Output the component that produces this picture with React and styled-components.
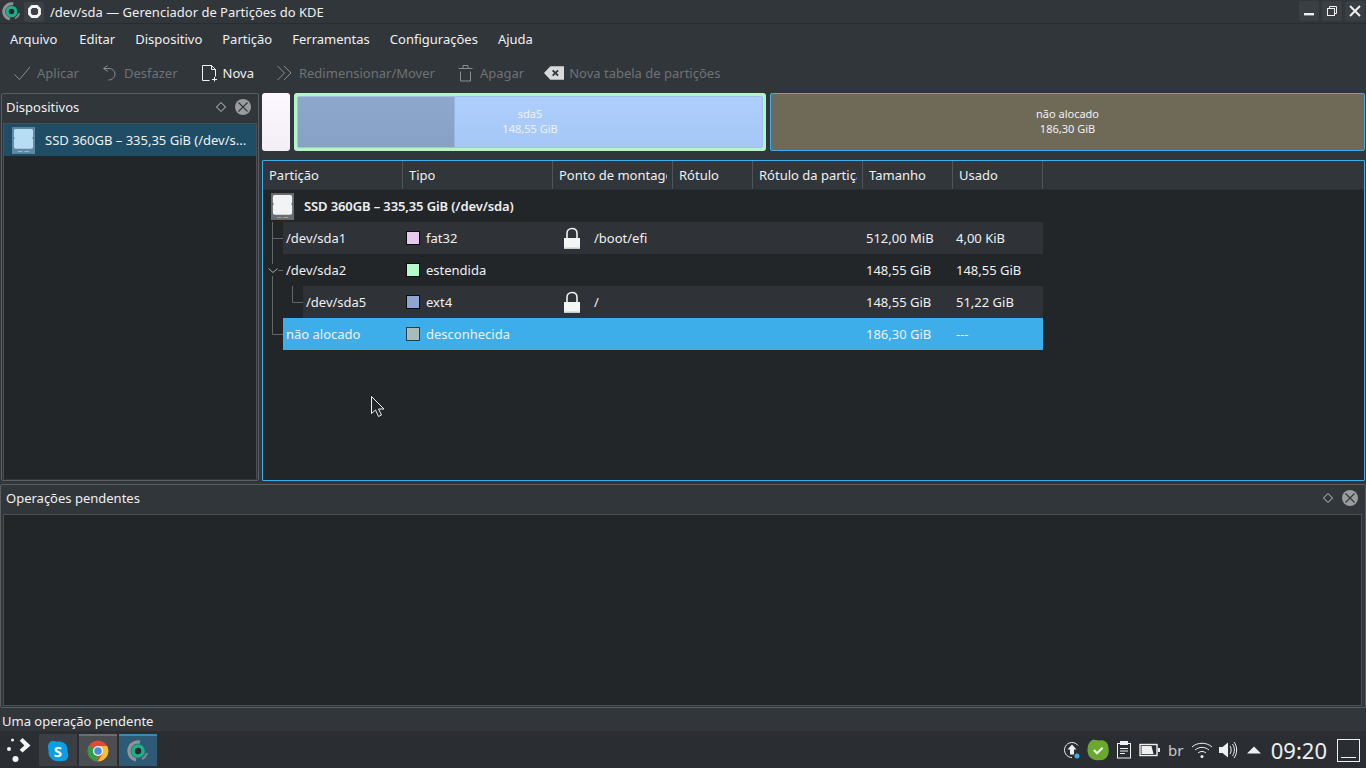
import React from "react"
import styled, { createGlobalStyle } from "styled-components"

const GlobalStyle = createGlobalStyle`
    html, body {
        margin: 0;
        padding: 0;
        height: 768px;
        overflow: hidden;
        background: #31363b;
    }
    body {
        font-family: "Noto Sans", "Open Sans", sans-serif;
        font-size: 13px;
        color: #eff0f1;
    }
`

const COLUMNS = [
    { label: "Partição", width: 140 },
    { label: "Tipo", width: 150 },
    { label: "Ponto de montagem", width: 120 },
    { label: "Rótulo", width: 80 },
    { label: "Rótulo da partição", width: 110 },
    { label: "Tamanho", width: 90 },
    { label: "Usado", width: 90 },
]

const ROWS = [
    { name: "/dev/sda1", type: "fat32", color: "#e6c8ee", lock: true, mount: "/boot/efi", size: "512,00 MiB", used: "4,00 KiB", alt: true, depth: 1, branch: "tee" },
    { name: "/dev/sda2", type: "estendida", color: "#b4f9ca", size: "148,55 GiB", used: "148,55 GiB", depth: 1, branch: "open" },
    { name: "/dev/sda5", type: "ext4", color: "#8da5cf", lock: true, mount: "/", size: "148,55 GiB", used: "51,22 GiB", alt: true, depth: 2, branch: "child" },
    { name: "não alocado", type: "desconhecida", color: "#a9bdb8", size: "186,30 GiB", used: "---", selected: true, depth: 1, branch: "last" },
]

export default function App() {
    return (
        <Screen>
            <GlobalStyle />
            <TitleBar>
                <AppLogo size={19} />
                <PinButton>
                    <svg width="13" height="13" viewBox="0 0 13 13"><path d="M4 1.500h5l2.500 2.500v5L9 11.500H4L1.500 9V4z" fill="none" stroke="#f4f5f5" strokeWidth="2.800" /></svg>
                </PinButton>
                <WindowTitle>/dev/sda — Gerenciador de Partições do KDE</WindowTitle>
                <WindowButtons>
                    <WindowButton>
                        <svg width="12" height="12" viewBox="0 0 12 12"><rect x="1" y="8" width="10" height="2.400" fill="#eff0f1" /></svg>
                    </WindowButton>
                    <WindowButton>
                        <svg width="12" height="12" viewBox="0 0 12 12" fill="none" stroke="#eff0f1"><rect x="1.500" y="3.500" width="7" height="7" /><path d="M3.500 3.500v-2h7v7h-2" /></svg>
                    </WindowButton>
                    <WindowButton>
                        <svg width="12" height="12" viewBox="0 0 12 12" stroke="#eff0f1" strokeWidth="2"><path d="M1 1l10 10M11 1L1 11" /></svg>
                    </WindowButton>
                </WindowButtons>
            </TitleBar>

            <MenuBar>
                {["Arquivo", "Editar", "Dispositivo", "Partição", "Ferramentas", "Configurações", "Ajuda"].map(item => (
                    <MenuItem key={item}>{item}</MenuItem>
                ))}
            </MenuBar>

            <ToolBar>
                <ToolButton>
                    <svg width="18" height="18" viewBox="0 0 18 18" fill="none" stroke="#8a8d90"><path d="M.5 10.500l5 5L16 3" /></svg>
                    Aplicar
                </ToolButton>
                <ToolButton>
                    <svg width="18" height="18" viewBox="0 0 18 18" fill="none" stroke="#8a8d90"><path d="M6.500 1.500L2.500 4.500 7 7.500" /><path d="M2.500 4.500H8c3.500 0 6 2.500 6 5.500s-2.500 6-6.500 6" /></svg>
                    Desfazer
                </ToolButton>
                <ToolButton active>
                    <svg width="18" height="18" viewBox="0 0 18 18" fill="none" stroke="#eff0f1"><path d="M9.500 16.500h-7v-15h9l4 4v7M11.500 1.500v4h4" /><path d="M14.500 13v4.500M12 15.500h5" /></svg>
                    Nova
                </ToolButton>
                <ToolButton>
                    <svg width="18" height="18" viewBox="0 0 18 18" fill="none" stroke="#8a8d90"><path d="M1.500 2l7 7-7 7M8 2l7 7-7 7" /></svg>
                    Redimensionar/Mover
                </ToolButton>
                <ToolButton>
                    <svg width="18" height="18" viewBox="0 0 18 18" fill="none" stroke="#8a8d90"><path d="M1.500 4.500h14M6 4.500V1.500h5v3M3.500 7.500v9.500h10V7.500" /></svg>
                    Apagar
                </ToolButton>
                <ToolButton>
                    <svg width="20" height="16" viewBox="0 0 22 16"><path d="M0 8l7-7.500h15v15H7z" fill="#d8d9da" /><path d="M9.500 5l6 6M15.500 5l-6 6" stroke="#31363b" strokeWidth="2" /></svg>
                    Nova tabela de partições
                </ToolButton>
            </ToolBar>

            <Workspace>
                <DevicesDock>
                    <DockHeader>
                        <DockTitle>Dispositivos</DockTitle>
                        <DockControls />
                    </DockHeader>
                    <DeviceList>
                        <DeviceRow>
                            <DriveIcon tone="#b8dcf3" frame="#5d8aa2" />
                            <DeviceName>SSD 360GB – 335,35 GiB (/dev/s...</DeviceName>
                        </DeviceRow>
                    </DeviceList>
                </DevicesDock>

                <MainColumn>
                    <PartitionBar>
                        <SmallPartition />
                        <ExtendedPartition>
                            <LogicalPartition>
                                <UsedArea />
                                <PartitionLabel $over>
                                    <span>sda5</span>
                                    <span>148,55 GiB</span>
                                </PartitionLabel>
                            </LogicalPartition>
                        </ExtendedPartition>
                        <FreePartition>
                            <PartitionLabel>
                                <span>não alocado</span>
                                <span>186,30 GiB</span>
                            </PartitionLabel>
                        </FreePartition>
                    </PartitionBar>

                    <TreePanel>
                        <TreeHeader>
                            {COLUMNS.map(col => (
                                <HeaderCell key={col.label} $width={col.width}>
                                    <HeaderText>{col.label}</HeaderText>
                                </HeaderCell>
                            ))}
                        </TreeHeader>
                        <DeviceTreeRow>
                            <DriveIcon tone="#f2f3f4" frame="#6a6d70" accent="#d89a4a" />
                            <strong>SSD 360GB – 335,35 GiB (/dev/sda)</strong>
                        </DeviceTreeRow>
                        {ROWS.map(row => <PartitionRow key={row.name} row={row} />)}
                    </TreePanel>
                </MainColumn>
            </Workspace>

            <PendingDock>
                <DockHeader>
                    <DockTitle>Operações pendentes</DockTitle>
                    <DockControls />
                </DockHeader>
                <PendingList />
            </PendingDock>

            <StatusBar>Uma operação pendente</StatusBar>

            <TaskBar>
                <Launcher>
                    <svg width="28" height="28" viewBox="0 0 28 28" fill="#f4f5f5">
                        <path d="M17.500 2l8 7.500-8 7-2.800-2.800 4.700-4.200-4.700-4.700z" />
                        <circle cx="7.500" cy="4" r="1.500" />
                        <circle cx="4" cy="13" r="2" />
                        <circle cx="10.500" cy="23" r="3" />
                    </svg>
                </Launcher>
                <TaskButton>
                    <svg width="24" height="24" viewBox="0 0 24 24">
                        <path d="M7 2c2 0 3 1 5 .6C18 2 22 6 21.500 12c0 1.500.7 2.500.7 4.500 0 3.500-3 6-6 5.500-1.500-.2-3 .2-4.500.2C6 22 2 17.500 2.500 12 2.600 10.500 2 9.500 2 8c0-3.500 2-6 5-6z" fill="#0b9ee4" />
                        <text x="12" y="17.500" textAnchor="middle" fontSize="15" fontWeight="700" fontFamily="Noto Sans" fill="#fff">S</text>
                    </svg>
                </TaskButton>
                <TaskButton $state="hover">
                    <ChromeIcon />
                </TaskButton>
                <TaskButton $state="active">
                    <AppLogo size={22} />
                </TaskButton>
                <Tray>
                    <TrayIcon>
                        <svg width="20" height="20" viewBox="0 0 20 20" fill="none" stroke="#eff0f1">
                            <path d="M16 5.500A7.500 7.500 0 1 0 10 17.500" />
                            <path d="M10 4.500L5.500 9.500H8v5h4v-5h2.500z" fill="#eff0f1" stroke="none" />
                            <circle cx="15" cy="16" r="2.500" fill="#3daee9" stroke="none" />
                        </svg>
                    </TrayIcon>
                    <TrayIcon>
                        <svg width="24" height="24" viewBox="0 0 24 24">
                            <path d="M5 1.500c3-1.500 6 .5 9 0 4-.5 8 1.500 9 5.500.7 3 1 5.500.5 8.500-1 4.500-4 7.500-8.500 7.500-3 .5-6.500.5-9.500-1.500C2 20 .5 16 .5 11.500.8 7 2 3.500 5 1.500z" fill="#6aa82f" />
                            <path d="M7.500 12l3.500 3.500 6-6" fill="none" stroke="#eff5e8" strokeWidth="2.200" />
                        </svg>
                    </TrayIcon>
                    <TrayIcon>
                        <svg width="18" height="20" viewBox="0 0 18 20" fill="none" stroke="#eff0f1">
                            <rect x="2.500" y="3.500" width="13" height="14.500" />
                            <rect x="5" y="1" width="8" height="4" fill="#eff0f1" stroke="none" />
                            <path d="M5 8.500h8M5 11h8M5 13.500h5" />
                        </svg>
                    </TrayIcon>
                    <TrayIcon>
                        <svg width="22" height="14" viewBox="0 0 22 14">
                            <rect x="1" y="1.500" width="17" height="11" fill="none" stroke="#eff0f1" strokeWidth="1.400" />
                            <path d="M2.500 3h10l2 8h-12z" fill="#eff0f1" />
                            <rect x="19" y="5" width="2" height="4" fill="#eff0f1" />
                        </svg>
                    </TrayIcon>
                    <TrayText>br</TrayText>
                    <TrayIcon>
                        <svg width="22" height="18" viewBox="0 0 22 18" fill="none" stroke="#eff0f1">
                            <path d="M1 6c5.500-5 14.500-5 20 0" />
                            <path d="M4 9c4-3.500 10-3.500 14 0" />
                            <path d="M7 12c2.500-2 5.500-2 8 0" />
                            <circle cx="11" cy="15.500" r="1.500" fill="#eff0f1" stroke="none" />
                        </svg>
                    </TrayIcon>
                    <TrayIcon>
                        <svg width="20" height="18" viewBox="0 0 20 18" fill="none" stroke="#eff0f1">
                            <path d="M1 6h3.500L10 1.500v15L4.500 12H1z" fill="#eff0f1" stroke="none" />
                            <path d="M12 5c1.500 2 1.500 6 0 8M14.500 3c2.500 3.500 2.500 8.500 0 12M16 1c3.500 4.500 3.500 11.500 0 16" />
                        </svg>
                    </TrayIcon>
                    <TrayIcon>
                        <svg width="14" height="8" viewBox="0 0 14 8"><path d="M0 7.500L7 .5l7 7z" fill="#eff0f1" /></svg>
                    </TrayIcon>
                    <Clock>09:20</Clock>
                    <ShowDesktop />
                </Tray>
            </TaskBar>

            <MouseCursor width="16" height="24" viewBox="0 0 16 24">
                <path d="M1.500 1.500v17l4-3.500 3 6.500 3-1.500-3-6h5.500z" fill="#232629" stroke="#eff0f1" />
            </MouseCursor>
        </Screen>
    )
}

function PartitionRow({ row }) {
    return (
        <RowLine>
            <TreeBranch type={row.branch} depth={row.depth} />
            <RowBody $alt={row.alt} $selected={row.selected}>
                <NameCell $depth={row.depth}>{row.name}</NameCell>
                <TypeCell>
                    <Swatch $color={row.color} $selected={row.selected} />
                    {row.type}
                </TypeCell>
                <MountCell>
                    {row.lock && <LockIcon />}
                    {row.mount && <MountText>{row.mount}</MountText>}
                </MountCell>
                <BlankCell $width={190} />
                <ValueCell>{row.size}</ValueCell>
                <ValueCell>{row.used}</ValueCell>
            </RowBody>
        </RowLine>
    )
}

function TreeBranch({ type, depth }) {
    return (
        <BranchSvg width={depth * 20} height="32" viewBox={`0 0 ${depth * 20} 32`} fill="none" stroke="#63676b">
            {type === "tee" && <path d="M9.500 0v32M9.500 16.500H20" />}
            {type === "open" && <path d="M9.500 0v10M9.500 22v10M15 16.500h5" />}
            {type === "open" && <path d="M5.500 14.500l4.500 4 4.500-4" stroke="#a6a8aa" />}
            {type === "child" && <path d="M9.500 0v32M29.500 0v16.500H40" />}
            {type === "last" && <path d="M9.500 0v16.500H20" />}
        </BranchSvg>
    )
}

function DockControls() {
    return (
        <>
            <FloatIcon width="12" height="12" viewBox="0 0 12 12">
                <path d="M6 1.500L10.500 6 6 10.500 1.500 6z" fill="none" stroke="#c8c9ca" />
            </FloatIcon>
            <CloseBadge>
                <svg width="10" height="10" viewBox="0 0 10 10" stroke="#31363b" strokeWidth="1.100"><path d="M.5.5l9 9M9.500.5l-9 9" /></svg>
            </CloseBadge>
        </>
    )
}

function DriveIcon({ tone, frame, accent = "#9cc0d6" }) {
    return (
        <svg width="23" height="27" viewBox="0 0 24 28">
            <rect x="0" y="0" width="24" height="28" fill={frame} />
            <path d="M4 2h16c1.500 0 2 1 2 2v6l-1 1.500 1 1.500v7c0 1.500-.5 2.500-2 2.500H4c-1.500 0-2-1-2-2.500v-7l1-1.500-1-1.500V4c0-1 .5-2 2-2z" fill={tone} />
            <path d="M6 25.500h5M13 25.500h5" stroke={accent} strokeWidth="1" />
        </svg>
    )
}

function LockIcon() {
    return (
        <LockSvg width="18" height="22" viewBox="0 0 18 22">
            <path d="M4 11V6.500C4 3.500 6 1.500 9 1.500s5 2 5 5V11" fill="none" stroke="#eff0f1" strokeWidth="1.600" />
            <rect x="1" y="11" width="16" height="11" fill="#f4f5f5" />
            <rect x="1" y="20.500" width="16" height="1.500" fill="#c9cacb" />
        </LockSvg>
    )
}

function AppLogo({ size }) {
    return (
        <svg width={size} height={size} viewBox="0 0 22 22" fill="none">
            <path d="M13 2.200A9 9 0 0 0 9 19.800" stroke="#8d9396" strokeWidth="3.400" />
            <path d="M19.800 13A9 9 0 0 1 15 19" stroke="#7d8488" strokeWidth="2.400" />
            <circle cx="11" cy="11" r="5" fill="#22272a" stroke="#19b08a" strokeWidth="3.600" />
        </svg>
    )
}

function ChromeIcon() {
    return (
        <svg width="22" height="22" viewBox="0 0 22 22">
            <circle cx="11" cy="11" r="10.500" fill="#dd4b39" />
            <path d="M11 11L1.900 5.800A10.500 10.500 0 0 0 11 21.500z" fill="#2f9e44" />
            <path d="M11 6h9.100A10.500 10.500 0 0 1 11 21.500l4.500-8z" fill="#fbc02d" />
            <circle cx="11" cy="11" r="5" fill="#fff" />
            <circle cx="11" cy="11" r="3.800" fill="#4a89dc" />
        </svg>
    )
}

const Screen = styled.div`
    width: 1366px;
    height: 768px;
    display: flex;
    flex-direction: column;
    position: relative;
    overflow: hidden;
    background: #31363b;
`

const TitleBar = styled.header`
    height: 24px;
    box-sizing: border-box;
    flex: none;
    display: flex;
    align-items: center;
    padding-left: 2px;
    background: #31363b;
    border-bottom: 1px solid #292d31;
`

const PinButton = styled.div`
    width: 20px;
    height: 20px;
    margin-left: 3px;
    display: flex;
    align-items: center;
    justify-content: center;
    background: #3c4146;
    border-radius: 2px;
`

const WindowTitle = styled.div`
    margin-left: 6px;
    line-height: 24px;
    white-space: nowrap;
`

const WindowButtons = styled.div`
    margin-left: auto;
    align-self: flex-start;
    margin-top: 1px;
    display: flex;
    gap: 3px;
    padding-right: 1px;
`

const WindowButton = styled.div`
    width: 20px;
    height: 20px;
    display: flex;
    align-items: center;
    justify-content: center;
    background: #3a3f44;
    border-radius: 2px;
`

const MenuBar = styled.nav`
    height: 30px;
    flex: none;
    display: flex;
    align-items: center;
    gap: 20px;
    padding-left: 10px;
`

const MenuItem = styled.span`
    white-space: nowrap;
    &:first-child {
        margin-right: 2px;
    }
`

const ToolBar = styled.div`
    height: 38px;
    flex: none;
    display: flex;
    align-items: center;
    gap: 22px;
    padding-left: 14px;
`

const ToolButton = styled.div`
    display: flex;
    align-items: center;
    gap: 5px;
    white-space: nowrap;
    color: ${props => (props.active ? "#eff0f1" : "#6e7275")};
    &:last-child {
        margin-left: -2px;
    }
`

const Workspace = styled.main`
    height: 388px;
    flex: none;
    margin-top: 1px;
    display: flex;
    gap: 3px;
    padding: 0 1px;
`

const DevicesDock = styled.aside`
    width: 258px;
    box-sizing: border-box;
    flex: none;
    display: flex;
    flex-direction: column;
    border: 1px solid #5a5e62;
    border-radius: 2px;
    padding: 0 1px 1px 1px;
`

const DockHeader = styled.div`
    height: 29px;
    box-sizing: border-box;
    flex: none;
    display: flex;
    align-items: center;
    padding: 0 0 3px 3px;
`

const DockTitle = styled.span`
    margin-right: auto;
`

const FloatIcon = styled.svg`
    margin-right: 8px;
`

const CloseBadge = styled.div`
    width: 16px;
    height: 16px;
    margin-right: 6px;
    border-radius: 50%;
    background: #9a9c9e;
    display: flex;
    align-items: center;
    justify-content: center;
`

const DeviceList = styled.div`
    flex: 1;
    background: #232629;
    border: 1px solid #4a4e52;
    border-bottom: 0;
`

const DeviceRow = styled.div`
    height: 32px;
    display: flex;
    align-items: center;
    gap: 10px;
    padding-left: 8px;
    background: #1f4d66;
    svg {
        flex: none;
    }
`

const DeviceName = styled.span`
    white-space: nowrap;
`

const MainColumn = styled.div`
    flex: 1;
    min-width: 0;
    display: flex;
    flex-direction: column;
    gap: 9px;
`

const PartitionBar = styled.div`
    height: 58px;
    flex: none;
    display: flex;
    gap: 4px;
`

const SmallPartition = styled.div`
    width: 28px;
    flex: none;
    border-radius: 3px;
    background: linear-gradient(#fdf8ff, #f3eef6);
`

const ExtendedPartition = styled.div`
    width: 472px;
    box-sizing: border-box;
    flex: none;
    padding: 3px;
    border-radius: 3px;
    background: #b4f5c8;
`

const LogicalPartition = styled.div`
    height: 100%;
    box-sizing: border-box;
    display: flex;
    position: relative;
    border-radius: 2px;
    border: 1px solid #a3c0ea;
    background: linear-gradient(#aecffc, #a5c7f7);
`

const UsedArea = styled.div`
    width: 157px;
    flex: none;
    box-sizing: border-box;
    border-right: 1px solid #9db5da;
    background: linear-gradient(#8ea7cd, #86a0c6);
`

const PartitionLabel = styled.div`
    flex: 1;
    display: flex;
    flex-direction: column;
    align-items: center;
    justify-content: center;
    padding-bottom: 2px;
    box-sizing: border-box;
    font-size: 11px;
    line-height: 15px;
    color: #eff0f1;
    ${props => props.$over && `
        position: absolute;
        inset: 0;
    `}
`

const FreePartition = styled.div`
    flex: 1;
    display: flex;
    box-sizing: border-box;
    border: 1px solid #3daee9;
    border-radius: 2px;
    background: #6f6a58;
`

const TreePanel = styled.section`
    flex: 1;
    box-sizing: border-box;
    background: #232629;
    border: 1px solid #3daee9;
    border-radius: 1px;
`

const TreeHeader = styled.div`
    height: 29px;
    box-sizing: border-box;
    display: flex;
    background: #31363b;
    border-bottom: 1px solid #2a2e32;
`

const HeaderCell = styled.div`
    width: ${props => props.$width}px;
    box-sizing: border-box;
    flex: none;
    display: flex;
    align-items: center;
    padding: 0 5px 0 6px;
    border-right: 1px solid #50555a;
`

const HeaderText = styled.span`
    white-space: nowrap;
    overflow: hidden;
`

const DeviceTreeRow = styled.div`
    height: 32px;
    display: flex;
    align-items: center;
    gap: 10px;
    padding-left: 8px;
    strong {
        font-weight: 600;
        letter-spacing: -0.12px;
    }
    svg {
        flex: none;
    }
`

const RowLine = styled.div`
    width: 780px;
    height: 32px;
    display: flex;
`

const BranchSvg = styled.svg`
    flex: none;
`

const RowBody = styled.div`
    flex: 1;
    display: flex;
    align-items: center;
    background: ${props => (props.$selected ? "#3daee9" : props.$alt ? "#2f3338" : "transparent")};
`

const NameCell = styled.div`
    width: ${props => 140 - props.$depth * 20}px;
    box-sizing: border-box;
    flex: none;
    padding-left: 3px;
    white-space: nowrap;
`

const TypeCell = styled.div`
    width: 150px;
    box-sizing: border-box;
    flex: none;
    display: flex;
    align-items: center;
    gap: 6px;
    padding-left: 3px;
`

const Swatch = styled.span`
    width: 12px;
    height: 12px;
    flex: none;
    background: ${props => props.$color};
    border: 1px solid ${props => (props.$selected ? "#1d3f52" : "#0b0c0d")};
`

const MountCell = styled.div`
    width: 120px;
    box-sizing: border-box;
    flex: none;
    display: flex;
    align-items: center;
    padding-left: 10px;
`

const LockSvg = styled.svg`
    flex: none;
`

const MountText = styled.span`
    margin-left: 13px;
`

const BlankCell = styled.div`
    width: ${props => props.$width}px;
    flex: none;
`

const ValueCell = styled.div`
    width: 90px;
    box-sizing: border-box;
    flex: none;
    padding-left: 3px;
    white-space: nowrap;
`

const PendingDock = styled.section`
    height: 224px;
    box-sizing: border-box;
    flex: none;
    margin-top: 3px;
    display: flex;
    flex-direction: column;
    border: 1px solid #5a5e62;
    border-radius: 2px;
    padding: 0 1px 1px 2px;
`

const PendingList = styled.div`
    flex: 1;
    margin-right: 2px;
    background: #232629;
    border: 1px solid #4a4e52;
`

const StatusBar = styled.div`
    height: 23px;
    box-sizing: border-box;
    flex: none;
    display: flex;
    align-items: flex-end;
    padding: 0 0 1px 2px;
    line-height: 17px;
`

const TaskBar = styled.footer`
    flex: 1;
    display: flex;
    align-items: stretch;
    gap: 2px;
    padding: 3px 6px 2px 0;
    background: #2a2e32;
`

const Launcher = styled.div`
    width: 37px;
    flex: none;
    display: flex;
    align-items: center;
    justify-content: center;
`

const TASK_BACKGROUNDS = {
    idle: "#3b3f44",
    hover: "#4b4e51",
    active: "#2f5a76",
}

const TASK_EDGES = {
    idle: "#3b3f44",
    hover: "#6b6e71",
    active: "#3a8ab8",
}

const TaskButton = styled.div`
    width: 38px;
    flex: none;
    box-sizing: border-box;
    display: flex;
    align-items: center;
    justify-content: center;
    background: ${props => TASK_BACKGROUNDS[props.$state || "idle"]};
    border-top: 2px solid ${props => TASK_EDGES[props.$state || "idle"]};
`

const Tray = styled.div`
    margin-left: auto;
    display: flex;
    align-items: center;
    gap: 4px;
`

const TrayIcon = styled.div`
    width: 22px;
    height: 26px;
    display: flex;
    align-items: center;
    justify-content: center;
`

const TrayText = styled.span`
    width: 22px;
    text-align: center;
    font-size: 15px;
    color: #c8c9ca;
`

const Clock = styled.span`
    margin-left: 2px;
    font-size: 22px;
    line-height: 26px;
    color: #eff0f1;
    white-space: nowrap;
`

const ShowDesktop = styled.div`
    width: 23px;
    height: 23px;
    margin-left: 6px;
    box-sizing: border-box;
    border: 1px solid #eff0f1;
    position: relative;
    &::after {
        content: "";
        position: absolute;
        left: 3px;
        right: 3px;
        bottom: 3px;
        height: 1px;
        background: #eff0f1;
    }
`

const MouseCursor = styled.svg`
    position: absolute;
    left: 370px;
    top: 395px;
`
